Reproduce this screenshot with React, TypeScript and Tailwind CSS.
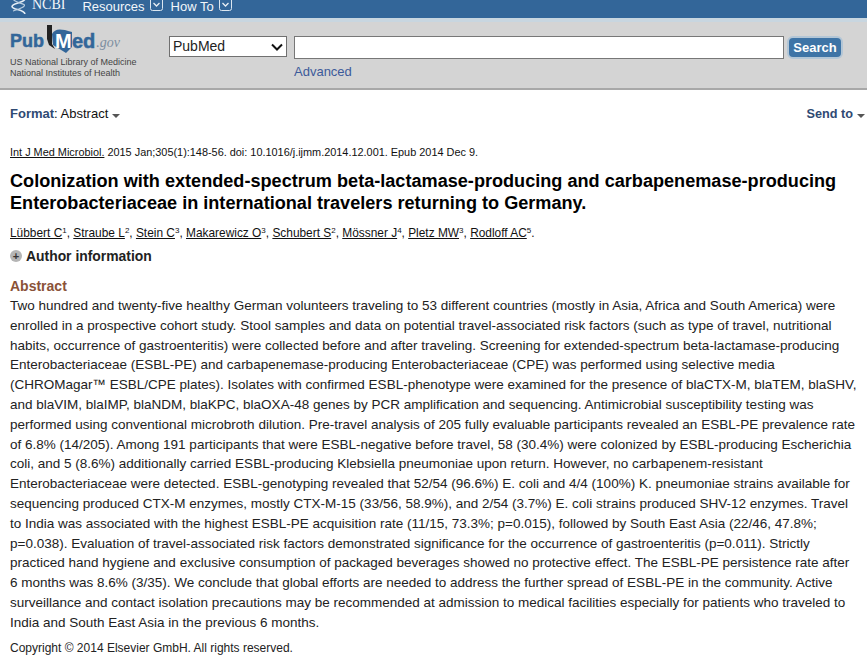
const abstractLines = [
  "Two hundred and twenty-five healthy German volunteers traveling to 53 different countries (mostly in Asia, Africa and South America) were",
  "enrolled in a prospective cohort study. Stool samples and data on potential travel-associated risk factors (such as type of travel, nutritional",
  "habits, occurrence of gastroenteritis) were collected before and after traveling. Screening for extended-spectrum beta-lactamase-producing",
  "Enterobacteriaceae (ESBL-PE) and carbapenemase-producing Enterobacteriaceae (CPE) was performed using selective media",
  "(CHROMagar™ ESBL/CPE plates). Isolates with confirmed ESBL-phenotype were examined for the presence of blaCTX-M, blaTEM, blaSHV,",
  "and blaVIM, blaIMP, blaNDM, blaKPC, blaOXA-48 genes by PCR amplification and sequencing. Antimicrobial susceptibility testing was",
  "performed using conventional microbroth dilution. Pre-travel analysis of 205 fully evaluable participants revealed an ESBL-PE prevalence rate",
  "of 6.8% (14/205). Among 191 participants that were ESBL-negative before travel, 58 (30.4%) were colonized by ESBL-producing Escherichia",
  "coli, and 5 (8.6%) additionally carried ESBL-producing Klebsiella pneumoniae upon return. However, no carbapenem-resistant",
  "Enterobacteriaceae were detected. ESBL-genotyping revealed that 52/54 (96.6%) E. coli and 4/4 (100%) K. pneumoniae strains available for",
  "sequencing produced CTX-M enzymes, mostly CTX-M-15 (33/56, 58.9%), and 2/54 (3.7%) E. coli strains produced SHV-12 enzymes. Travel",
  "to India was associated with the highest ESBL-PE acquisition rate (11/15, 73.3%; p=0.015), followed by South East Asia (22/46, 47.8%;",
  "p=0.038). Evaluation of travel-associated risk factors demonstrated significance for the occurrence of gastroenteritis (p=0.011). Strictly",
  "practiced hand hygiene and exclusive consumption of packaged beverages showed no protective effect. The ESBL-PE persistence rate after",
  "6 months was 8.6% (3/35). We conclude that global efforts are needed to address the further spread of ESBL-PE in the community. Active",
  "surveillance and contact isolation precautions may be recommended at admission to medical facilities especially for patients who traveled to",
  "India and South East Asia in the previous 6 months.",
];

const authors: [string, string][] = [
  ["Lübbert C", "1"],
  ["Straube L", "2"],
  ["Stein C", "3"],
  ["Makarewicz O", "3"],
  ["Schubert S", "2"],
  ["Mössner J", "4"],
  ["Pletz MW", "3"],
  ["Rodloff AC", "5"],
];

function NavChevron() {
  return (
    <svg width="13" height="12" viewBox="0 0 13 12" fill="none" className="ml-[5px] shrink-0">
      <rect x="0.5" y="-3.5" width="12" height="14" rx="2" stroke="#dbe6f0" />
      <path d="M3.5 3 L6.5 6 L9.5 3" stroke="#e8eff5" strokeWidth="1.3" />
    </svg>
  );
}

function Caret() {
  return <span className="ml-1 mt-[3px] h-0 w-0 border-x-4 border-t-4 border-x-transparent border-t-[#555]" />;
}

export default function App() {
  return (
    <div className="h-[672px] w-[867px] overflow-hidden bg-white font-['Liberation_Sans',Arial,sans-serif] text-[#111]">
      {/* NCBI bar */}
      <div className="flex h-[18px] items-start overflow-hidden bg-[#336699] pl-[10px] text-[#f2f6fa]">
        <svg width="20" height="14" viewBox="0 0 20 14" fill="none" className="shrink-0">
          <path d="M15 -1 C14 3 2 3 2 6.5 C2 10 14 9 15 14" stroke="#e6eef5" strokeWidth="1.6" />
          <path d="M3 -1 C4 1.5 9 2.5 14 4.5 C16 6 11 9 3 11" stroke="#bcd0e2" strokeWidth="1.1" />
        </svg>
        <span className="ml-[2px] font-['Liberation_Serif',serif] text-[14px] leading-[10px]">NCBI</span>
        <div className="ml-[17px] flex items-start">
          <span className="text-[13px] leading-[14px]">Resources</span>
          <NavChevron />
          <span className="ml-[8px] text-[13px] leading-[14px]">How To</span>
          <NavChevron />
        </div>
      </div>

      {/* Search bar */}
      <div className="h-[72px] border-t-[4px] border-b-[2px] border-t-[#c8d6e0] border-b-[#a8a8a8] bg-[#d4d4d4]">
        <div className="flex pl-[10px] pt-[7px]">
          <div className="-mt-[4px] w-[159px] shrink-0">
            <div className="flex h-[28px] items-end font-bold">
              <span className="mb-[2px] w-[36px] text-[18px] leading-[20px] text-[#336699] [-webkit-text-stroke:0.5px_#336699]">Pub</span>
              <div className="relative h-[28px] w-[26px] shrink-0">
                <svg width="26" height="28" viewBox="0 0 26 28">
                  <path d="M1 0 L6 0 L6 19 L9 24 L3 20 L1 14 Z" fill="#222" />
                  <path d="M6 9 C9 4 13 3 26 7 L26 22 L20 28 L7 20 Z" fill="#336699" />
                </svg>
                <span className="absolute bottom-[2px] left-[9px] text-[20px] leading-[20px] text-white">M</span>
              </div>
              <span className="mb-[2px] text-[20px] leading-[20px] text-[#336699] [-webkit-text-stroke:0.5px_#336699]">ed</span>
              <span className="mb-[1px] ml-[1px] font-['Liberation_Serif',serif] text-[14px] font-normal italic leading-[18px] text-[#7d8ea0]">.gov</span>
            </div>
            <div className="mt-[4px] text-[9px] leading-[10.5px] text-[#444]">US National Library of Medicine</div>
            <div className="text-[9px] leading-[10.5px] text-[#444]">National Institutes of Health</div>
          </div>
          <div className="mt-[7px] flex h-[21px] w-[118px] shrink-0 items-center justify-between border border-[#707070] bg-white pl-[3px] pr-[3px] text-[14px] text-[#222]">
            <span>PubMed</span>
            <svg width="12" height="8" viewBox="0 0 12 8" fill="none">
              <path d="M1 1.5 L6 6.5 L11 1.5" stroke="#111" strokeWidth="2" />
            </svg>
          </div>
          <div className="ml-[7px] mt-[7px] w-[490px] shrink-0">
            <div className="h-[23px] border border-[#777] bg-white" />
            <div className="mt-[5px] text-[13px] leading-[16px] text-[#3c5a9a]">Advanced</div>
          </div>
          <div className="ml-[3px] mt-[7px] flex h-[23px] w-[56px] items-center justify-center rounded-[6px] border-2 border-[#b3c6d6] bg-[#3e74a6] text-[13px] font-bold text-white">
            Search
          </div>
        </div>
      </div>

      {/* Format row */}
      <div className="flex h-[48px] items-center justify-between pl-[10px] pr-[2px] text-[13px] leading-[16px]">
        <div className="flex items-center">
          <span className="font-bold text-[#2f4a73]">Format</span>
          <span>: Abstract</span>
          <Caret />
        </div>
        <div className="flex items-center">
          <span className="text-[12.7px] font-bold text-[#2f4a73]">Send to</span>
          <Caret />
        </div>
      </div>

      {/* Record */}
      <div className="pl-[10px]">
        <div className="mt-[8px] text-[10.9px] leading-[13px]">
          <span className="underline">Int J Med Microbiol.</span> 2015 Jan;305(1):148-56. doi: 10.1016/j.ijmm.2014.12.001. Epub 2014 Dec 9.
        </div>
        <h1 className="mt-[11px] whitespace-nowrap text-[18.13px] font-bold leading-[22px] text-black">
          <div>Colonization with extended-spectrum beta-lactamase-producing and carbapenemase-producing</div>
          <div>Enterobacteriaceae in international travelers returning to Germany.</div>
        </h1>
        <div className="mt-[11px] text-[11.9px] leading-[16px]">
          {authors.map(([name, n], i) => (
            <span key={name}>
              <span className="underline">{name}</span>
              <sup className="text-[8px]">{n}</sup>
              {i < authors.length - 1 ? ", " : "."}
            </span>
          ))}
        </div>
        <div className="mt-[7px] flex items-center text-[13.9px] font-bold leading-[16px]">
          <span className="flex h-[12px] w-[12px] items-center justify-center rounded-full bg-[#b5b5b5] text-[11px] leading-none text-[#333]">+</span>
          <span className="ml-[4px] text-[#222]">Author information</span>
        </div>
        <div className="mt-[14px] text-[14px] font-bold leading-[16px] text-[#8a5238]">Abstract</div>
        <div className="mt-[2px] text-[13.5px] leading-[19.8px] text-[#222]">
          {abstractLines.map((line) => (
            <div key={line} className="whitespace-nowrap">{line}</div>
          ))}
        </div>
        <div className="mt-[7px] text-[12px] leading-[16px] text-[#222]">Copyright © 2014 Elsevier GmbH. All rights reserved.</div>
      </div>
    </div>
  );
}
